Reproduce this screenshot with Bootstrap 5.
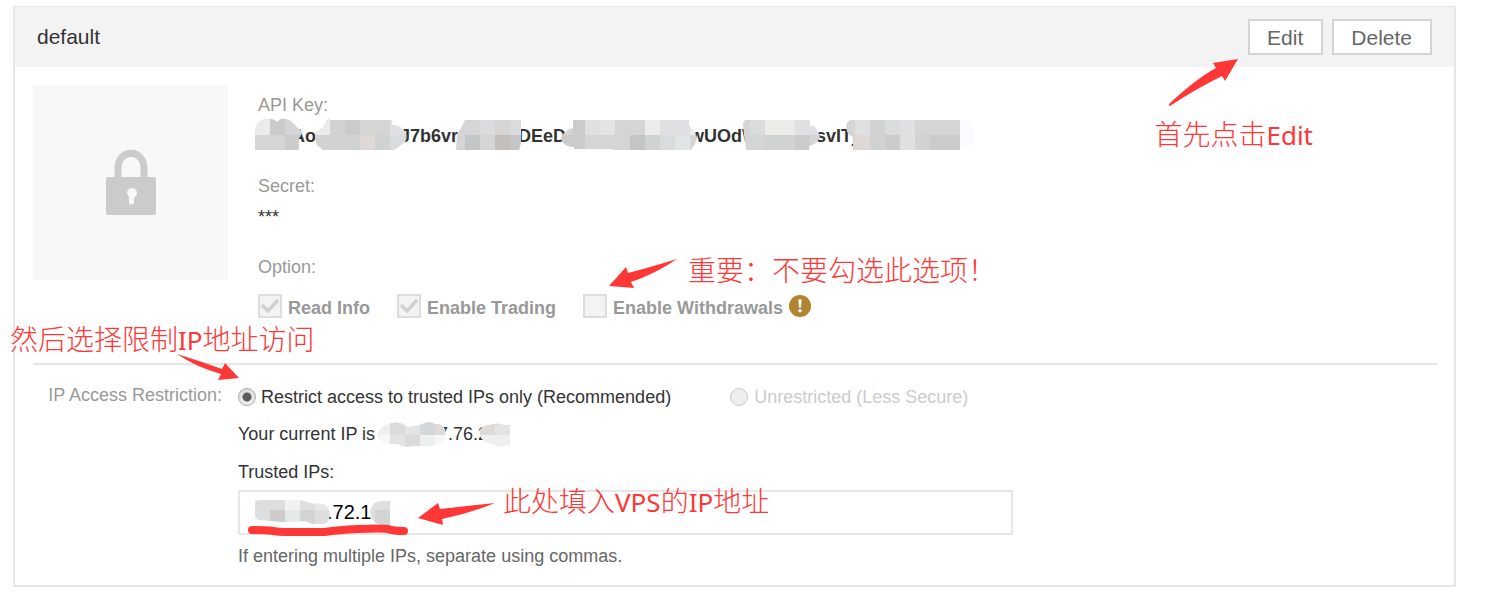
<!DOCTYPE html>
<html lang="en">
<head>
<meta charset="utf-8">
<meta name="viewport" content="width=device-width, initial-scale=1">
<title>API key settings</title>
<link href="https://cdn.jsdelivr.net/npm/bootstrap@5.3.0/dist/css/bootstrap.min.css" rel="stylesheet">
<style>
  body { font-family: "Liberation Sans", Arial, sans-serif; font-size: 18px; line-height: 24px; color: #333; background: #fff; }
  .page { padding: 6px 33px 20px 13px; }
  .key-card { border: 2px solid #e6e6e6; border-top-width: 1px; border-radius: 0; color: #333; }
  .key-head { background: #f3f3f3; border: 0; border-radius: 0 !important; height: 60px; padding: 0 22px; }
  .key-name { font-size: 21px; font-weight: 400; }
  .key-actions { gap: 9px; }
  .btn-key { font-size: 21px; line-height: 30px; padding: 2px 18px 0 17px; border: 2px solid #d4d4d4; border-radius: 0; background: #fff; color: #666; }
  .key-body { padding: 18px 17px 17px 18px; }
  .lock-tile { width: 195px; height: 195px; background: #f8f8f8; flex: none; }
  .key-info { padding: 8px 0 0 30px; }
  .muted { color: #999; }
  .value-row { margin: 7px 0 26px; height: 24px; font-weight: 700; }
  .secret { font-weight: 400; }
  .key-parts { display: grid; grid-template-columns: 108px 118px 172px 126px 1fr; padding-left: 34px; }
  .mosaic { position: absolute; pointer-events: none; }
  .key-mosaic { left: -3px; top: -6px; }
  .ip-mosaic { left: 139px; top: -2px; }
  .field-mosaic { left: 16px; top: 9px; }
  .option-row { margin-top: 15px; height: 24px; font-weight: 700; color: #999; }
  .option-row label, .radio-row label { opacity: 1 !important; }
  .option-row label { padding-top: 3px; }
  .opt { margin-right: 27px; }
  .tick { appearance: none; width: 24px; height: 24px; margin: 0 6px 0 0; border: 2px solid #ddd; background: #f3f3f3 center/20px no-repeat; flex: none; }
  .tick:checked { background-image: url("data:image/svg+xml,%3Csvg xmlns='http://www.w3.org/2000/svg' viewBox='0 0 20 20'%3E%3Cpath d='M2 9l6 6L18 4' fill='none' stroke='%23d0d0d0' stroke-width='3.4'/%3E%3C/svg%3E"); }
  .warn { margin-left: 6px; }
  .rule { border-top: 2px solid #e6e6e6; margin: 45px 0 0; opacity: 1; color: inherit; }
  .ip-label { width: 205px; padding: 18px 16px 0 0; text-align: right; flex: none; }
  .ip-fields { padding-top: 20px; }
  .radio-row { height: 24px; }
  .dot { appearance: none; width: 18px; height: 18px; margin: 0 5px 0 0; border: 1px solid #aaa; border-radius: 50%; background: linear-gradient(#e2e2e2, #eee); flex: none; }
  .dot:checked { background: radial-gradient(circle, #5c5c5c 0 4px, transparent 5px), linear-gradient(#ddd, #eee); }
  .dot:disabled { border-color: #ccc; margin-right: 6px; background: #eee; }
  .off { color: #ccc; margin-left: 59px; }
  .current-ip { margin-top: 13px; }
  .current-rest { margin-left: 63px; }
  .trusted-label { margin-top: 14px; }
  .ip-box { max-width: 775px; margin-top: 6px; }
  .ip-input { height: 45px; border: 2px solid #e6e6e6; border-radius: 0; font-size: 20px; color: #000; padding: 0 16px 0 87px; }
  .hint { margin-top: 9px; color: #666; }
  .note { position: absolute; color: #ff3737; font: 300 28px/28px "Noto Sans CJK SC", sans-serif; white-space: nowrap; }
  .note span { font: 400 26px/28px "Noto Sans", sans-serif; }
  .note-edit { right: 176px; top: 119px; }
  .note-option { left: 688px; top: 255px; }
  .note-limit { left: 10px; top: 324px; }
  .note-vps { left: 503px; top: 486px; }
  .arrow { position: absolute; fill: #ff3737; pointer-events: none; }
  .arrow-edit { right: 250px; top: 58px; }
  .arrow-option { left: 609px; top: 259px; }
  .arrow-limit { left: 176px; top: 353px; }
  .arrow-vps { left: 418px; top: 502px; }
  .underline-mark { position: absolute; left: 248px; top: 524px; pointer-events: none; }
</style>
</head>
<body>
<div class="page position-relative">
  <main class="card key-card">
    <header class="card-header key-head d-flex align-items-center justify-content-between">
      <h1 class="key-name m-0">default</h1>
      <div class="key-actions d-flex">
        <button type="button" class="btn btn-key">Edit</button>
        <button type="button" class="btn btn-key">Delete</button>
      </div>
    </header>
    <div class="key-body">
      <section class="d-flex">
        <div class="lock-tile d-flex align-items-center justify-content-center">
          <svg width="52" height="68" viewBox="0 0 52 68" aria-label="Locked" role="img">
            <path d="M13 31V20C13 -1 39 -1 39 20V31" fill="none" stroke="#cbcbcb" stroke-width="7"/>
            <rect x="1" y="28" width="50" height="38" rx="2" fill="#cbcbcb"/>
            <path d="M22 44a5 5 0 1 1 8 4l-1 1v5q-3 3-5 0v-6z" fill="#f8f8f8"/>
          </svg>
        </div>
        <div class="key-info">
          <div class="muted">API Key:</div>
          <div class="value-row key-parts position-relative">
            <span>Ao</span><span>J7b6vr</span><span>DEeD</span><span>wUOdW</span><span>svITj</span>
            <svg class="mosaic key-mosaic" width="720" height="34" viewBox="255 118 720 34">
              <defs>
                <clipPath id="keyShape">
                  <path d="M255 150V130Q257 120 266 119Q271 118 274 120L277 122L281 119Q288 118 292 122Q297 128 303 132L299 138V150Z"/>
                  <path d="M316 132Q319 130 323 128L327 120L330 117V120H392V125Q401 125 405 132Q408 137 405 142L398 147L394 150H323L317 145Q314 136 316 132Z"/>
                  <path d="M457 134L461 128L465 120H521V142L519 150H456Z"/>
                  <path d="M561 139Q564 129 573 128V120H689V126L694 131L697 138L695 144L691 150H614L612 149H574V147Q563 146 561 139Z"/>
                  <path d="M743 124L745 120H810V126L815 127L820 136Q818 144 809 146V150H746L744 135Z"/>
                  <path d="M846 127Q847 120 851 120H960V150H853V137Q847 135 846 127ZM960 120H968L974 125V142L970 147L960 150Z"/>
                </clipPath>
              </defs>
              <g clip-path="url(#keyShape)" shape-rendering="crispEdges">
                <path fill="#d5d5d5" d="M255 117h705v33H255z"/>
                <path fill="#fbfcff" d="M960 117h15v33h-15z"/>
                <path fill="#ebebea" d="M255 117h15v18h-15zM315 117h15v18h-15zM645 120h15v15h-15zM690 120h15v15h-15zM765 120h30v15h-30z"/>
                <path fill="#cccbcc" d="M270 117h15v18h-15zM345 120h15v15h-15zM573 120h12v15h-12zM285 135h15v15h-15zM561 135h24v15h-24zM630 135h15v15h-15zM795 135h15v15h-15zM885 135h15v15h-15zM930 135h30v15h-30z"/>
                <path fill="#e0e0e2" d="M585 120h15v15h-15zM660 120h30v15h-30zM390 120h15v15h-15zM795 120h15v15h-15zM810 120h15v15h-15zM855 120h15v15h-15zM900 120h15v30h-15z"/>
                <path fill="#e5e4e2" d="M600 120h15v15h-15z"/>
                <path fill="#d1d3d3" d="M315 135h75v15h-75zM330 120h15v15h-15zM645 135h15v15h-15zM765 135h30v15h-30zM870 120h15v30h-15zM915 135h15v15h-15z"/>
                <path fill="#dadbdc" d="M480 120h15v15h-15zM510 120h11v15h-11zM750 120h15v15h-15zM885 120h15v15h-15zM390 135h15v15h-15zM660 135h15v15h-15z"/>
                <path fill="#c4c5c7" d="M465 135h15v15h-15zM510 135h11v15h-11zM630 135h15v15h-15z"/>
                <path fill="#c5bfbc" d="M495 135h15v15h-15z"/>
                <path fill="#ded9d6" d="M360 135h15v15h-15zM855 135h15v15h-15z"/>
                <path fill="#e0e5e6" d="M675 135h15v15h-15z"/>
              </g>
            </svg>
          </div>
          <div class="muted">Secret:</div>
          <div class="value-row secret">***</div>
          <div class="muted">Option:</div>
          <div class="option-row d-flex align-items-center">
            <div class="opt d-flex align-items-center"><input class="tick" type="checkbox" id="read" checked disabled><label for="read">Read Info</label></div>
            <div class="opt d-flex align-items-center"><input class="tick" type="checkbox" id="trade" checked disabled><label for="trade">Enable Trading</label></div>
            <div class="d-flex align-items-center"><input class="tick" type="checkbox" id="withdraw" disabled><label for="withdraw">Enable Withdrawals</label></div>
            <svg class="warn" width="22" height="22" viewBox="0 0 22 22" role="img" aria-label="Warning">
              <circle cx="11" cy="11" r="11" fill="#b08430"/>
              <path d="M9.3 4.5h3.4L12 12.5h-2z" fill="#fff"/><circle cx="11" cy="15.8" r="1.7" fill="#fff"/>
            </svg>
          </div>
        </div>
      </section>
      <hr class="rule">
      <section class="d-flex">
        <div class="ip-label muted" id="ipLabel">IP Access Restriction:</div>
        <div class="ip-fields flex-grow-1">
          <div class="radio-row d-flex" role="radiogroup" aria-labelledby="ipLabel">
            <div class="d-flex align-items-center"><input class="dot" type="radio" name="access" id="restricted" checked><label for="restricted">Restrict access to trusted IPs only (Recommended)</label></div>
            <div class="off d-flex align-items-center"><input class="dot" type="radio" name="access" id="open" disabled><label for="open">Unrestricted (Less Secure)</label></div>
          </div>
          <div class="current-ip position-relative"><span>Your current IP is</span><span class="current-rest">7.76.2</span>
            <svg class="mosaic ip-mosaic" width="136" height="28" viewBox="377 420 136 28">
              <defs><clipPath id="ipShape">
                <path d="M377 435Q380 425 389 424Q395 421 403 424L408 427L420 425Q429 420 435 424Q443 423 445 430Q447 440 440 444L430 446H413Q404 448 397 444Q380 445 377 435Z"/>
                <path d="M479 432Q482 425 489 425Q497 422 504 425H510V445L500 447L489 443Q480 441 479 432Z"/>
              </clipPath></defs>
              <g clip-path="url(#ipShape)" shape-rendering="crispEdges">
                <path fill="#eeefef" d="M375 420h138v28H375z"/>
                <path fill="#dcdbda" d="M390 420h15v15h-15zM405 435h15v12h-15zM435 420h15v15h-15zM480 420h15v15h-15z"/>
                <path fill="#d5d6d9" d="M420 420h15v15h-15z"/>
                <path fill="#e2e3e4" d="M405 420h15v15h-15zM495 420h15v15h-15zM390 435h15v12h-15z"/>
                <path fill="#f7f7f7" d="M375 435h15v12h-15zM435 435h15v12h-15z"/>
              </g>
            </svg>
          </div>
          <label class="trusted-label d-block" for="trusted">Trusted IPs:</label>
          <div class="ip-box position-relative">
            <input class="form-control ip-input" id="trusted" type="text" value=".72.1">
            <svg class="mosaic field-mosaic" width="138" height="28" viewBox="254 499 138 28">
              <defs><clipPath id="fieldShape">
                <path d="M255 501L260 500H300L314 504Q325 502 329 510Q332 519 325 524H313L305 521L285 522L270 521L258 520L255 517Z"/>
                <path d="M370 512Q372 501 382 501H390V525H382Q371 523 370 512Z"/>
              </clipPath></defs>
              <g clip-path="url(#fieldShape)" shape-rendering="crispEdges">
                <path fill="#dedede" d="M254 499h138v28H254z"/>
                <path fill="#ccc" d="M270 510h15v15h-15z"/>
                <path fill="#f1f1ef" d="M285 499h15v11h-15z"/>
                <path fill="#d3d3d4" d="M300 510h15v15h-15zM375 510h15v15h-15z"/>
                <path fill="#e6e7e7" d="M315 499h15v11h-15zM285 510h15v15h-15z"/>
              </g>
            </svg>
          </div>
          <div class="hint">If entering multiple IPs, separate using commas.</div>
        </div>
      </section>
    </div>
  </main>

  <!-- Red walkthrough notes laid over the card -->
  <div lang="zh-CN">
    <div class="note note-edit">首先点击<span>Edit</span></div>
    <div class="note note-option">重要：不要勾选此选项！</div>
    <div class="note note-limit">然后选择限制<span>IP</span>地址访问</div>
    <div class="note note-vps">此处填入<span>VPS</span>的<span>IP</span>地址</div>
  </div>
  <svg class="arrow arrow-edit" width="70" height="49" viewBox="0 0 70 49"><path d="M69 1L44 5l3 5Q28 20 0 46q0 2 1 2Q25 32 53 18l3 5z"/></svg>
  <svg class="arrow arrow-option" width="68" height="30" viewBox="0 0 68 30"><path d="M0 27L17 8l2 6Q42 8 68 0Q46 15 22 23l3 6z"/></svg>
  <svg class="arrow arrow-limit" width="63" height="28" viewBox="0 0 63 28"><path d="M63 25L49 10l-3 6Q24 8 1 1Q20 14 45 21l-3 6z"/></svg>
  <svg class="arrow arrow-vps" width="78" height="24" viewBox="0 0 78 24"><path d="M0 16L20 1l2 6Q48 4 77 1Q50 12 24 17l1 6z"/></svg>
  <svg class="underline-mark" width="162" height="14" viewBox="0 0 162 14"><path d="M4 6Q17 6 25 7Q32 8 36 8H77Q90 6 110 5Q133 4 140 5Q145 7 156 7" fill="none" stroke="#ff3737" stroke-width="8" stroke-linecap="round"/></svg>
</div>
<script src="https://cdn.jsdelivr.net/npm/bootstrap@5.3.0/dist/js/bootstrap.bundle.min.js"></script>
</body>
</html>
